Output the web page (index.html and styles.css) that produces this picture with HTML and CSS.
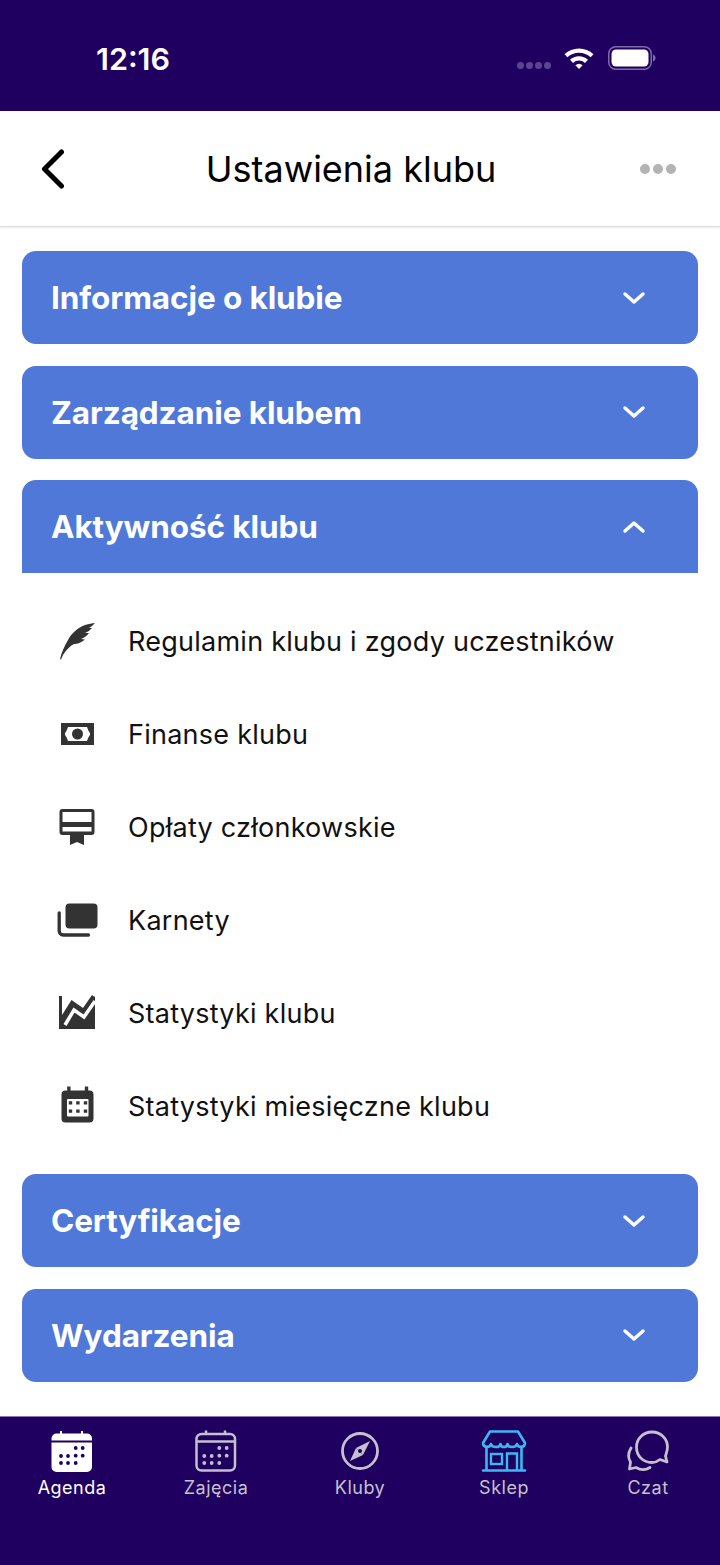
FILE: index.html
```html
<!DOCTYPE html>
<html lang="pl">
<head>
  <meta charset="UTF-8">
  <meta name="viewport" content="width=device-width, initial-scale=1.0">
  <title>Ustawienia klubu</title>
  <link rel="stylesheet" href="styles.css">
</head>
<body>
  <div class="app">
    <!-- Status bar -->
    <div class="status-bar">
      <span class="status-time">12:16</span>
      <div class="status-icons">
        <div class="signal-dots"><i></i><i></i><i></i><i></i></div>
        <svg class="wifi-icon" width="32" height="24" viewBox="0 0 32 24">
          <path d="M1.5 8.2 A21 21 0 0 1 30.5 8.2 L27.6 11.3 A17 17 0 0 0 4.4 11.3 Z" fill="#fff"/>
          <path d="M7 13.8 A13.2 13.2 0 0 1 25 13.8 L22 16.9 A9 9 0 0 0 10 16.9 Z" fill="#fff"/>
          <path d="M12.4 19.3 A5.4 5.4 0 0 1 19.6 19.3 L16 23 Z" fill="#fff"/>
        </svg>
        <svg class="battery-icon" width="48" height="24" viewBox="0 0 48 24">
          <rect x="0.75" y="0.75" width="42.5" height="22.5" rx="7" fill="none" stroke="#7f6ba6" stroke-width="1.5"/>
          <rect x="3.5" y="3.5" width="37" height="17" rx="4.5" fill="#fff"/>
          <path d="M45 8.5 C46.5 9 47.5 10.3 47.5 12 C47.5 13.7 46.5 15 45 15.5 Z" fill="#7f6ba6"/>
        </svg>
      </div>
    </div>

    <!-- Header -->
    <header class="top-bar">
      <svg class="back-icon" width="24" height="40" viewBox="0 0 24 40">
        <path d="M20.500 3 L3.500 20 L20.500 37" fill="none" stroke="#000" stroke-width="5" stroke-linecap="round" stroke-linejoin="round"/>
      </svg>
      <h1 class="top-title">Ustawienia klubu</h1>
      <div class="more-dots"><i></i><i></i><i></i></div>
    </header>

    <main class="content">
      <div class="acc-head">
        <span>Informacje o klubie</span>
        <svg class="chevron" width="24" height="14" viewBox="0 0 24 14"><path d="M3 3 L12 11 L21 3"/></svg>
      </div>
      <div class="acc-head">
        <span>Zarządzanie klubem</span>
        <svg class="chevron" width="24" height="14" viewBox="0 0 24 14"><path d="M3 3 L12 11 L21 3"/></svg>
      </div>

      <div class="acc-open">
        <div class="acc-head acc-head-open">
          <span>Aktywność klubu</span>
          <svg class="chevron" width="24" height="14" viewBox="0 0 24 14"><path d="M3 11 L12 3 L21 11"/></svg>
        </div>
        <ul class="acc-list">
          <li class="acc-row">
            <svg class="row-icon" width="40" height="40" viewBox="0 0 40 40">
              <path d="M4 38 C6 30 9 24 12 19 C15 13 21 7 29 4 C33 3 36 2 39 2 C37 4 35 6 33 7 L36 7 C34 9 32 11 29 12 L33 12 C31 15 28 17 25 18 L29 18.500 C26 21 22 23 18 23 C14 25 10 29 7 34 L5 38.500 Z" fill="#333"/>
            </svg>
            <span>Regulamin klubu i zgody uczestników</span>
          </li>
          <li class="acc-row">
            <svg class="row-icon" width="40" height="40" viewBox="0 0 40 40">
              <path fill-rule="evenodd" d="M5 9 H38 V31 H5 Z M12 13 C11 16 10 18 9 19 V21 C10 22 11 24 12 27 H31 C32 24 33 22 34 21 V19 C33 18 32 16 31 13 Z" fill="#333"/>
              <circle cx="21.500" cy="20" r="5.500" fill="#333"/>
            </svg>
            <span>Finanse klubu</span>
          </li>
          <li class="acc-row">
            <svg class="row-icon" width="40" height="40" viewBox="0 0 40 40">
              <path fill-rule="evenodd" d="M6.500 2 H35.500 A3 3 0 0 1 38.500 5 V25 A3 3 0 0 1 35.500 28 H6.500 A3 3 0 0 1 3.500 25 V5 A3 3 0 0 1 6.500 2 Z M6.500 5 V15 H35.500 V5 Z M6.500 20 V24.500 H35.500 V20 Z" fill="#333"/>
              <path d="M14 28 H28 V38 L21 35 L14 38 Z" fill="#333"/>
            </svg>
            <span>Opłaty członkowskie</span>
          </li>
          <li class="acc-row">
            <svg class="row-icon row-icon-wide" width="42" height="40" viewBox="0 0 42 40">
              <rect x="9.500" y="3.500" width="32" height="25" rx="4" fill="#333"/>
              <path d="M3.200 12.800 V31 A4 4 0 0 0 7.200 35 H32.500" fill="none" stroke="#333" stroke-width="3.300" stroke-linecap="round"/>
            </svg>
            <span>Karnety</span>
          </li>
          <li class="acc-row">
            <svg class="row-icon" width="40" height="40" viewBox="0 0 40 40">
              <path d="M3 3 H6 V23 L16 8 L27 16 L37 2 L39 4 V36 H3 Z" fill="#333"/>
              <path d="M9 32 L18 17 L28 24 L39 8" fill="none" stroke="#fff" stroke-width="3.500"/>
              <path d="M6 23 L16 8 L27 16 L38 1" fill="none" stroke="#fff" stroke-width="3"/>
              <path d="M3 3 H6 V30 H3 Z M15.500 7 L27 15 L36 2 L39 4.500 L27.500 20 L16.500 12.500 L6 28 V22 Z" fill="#333"/>
            </svg>
            <span>Statystyki klubu</span>
          </li>
          <li class="acc-row">
            <svg class="row-icon" width="40" height="40" viewBox="0 0 40 40">
              <path d="M11.200 0.500 H14.500 V4.500 H28.800 V0.500 H32.200 V4.500 H33.500 A4 4 0 0 1 37.500 8.500 V32.500 A4 4 0 0 1 33.500 36.500 H9.500 A4 4 0 0 1 5.500 32.500 V8.500 A4 4 0 0 1 9.500 4.500 H11.200 Z" fill="#333"/>
              <rect x="11" y="13" width="21.500" height="17.500" rx="1" fill="#fff"/>
              <path d="M12.800 15.200 h3.400 v3.300 h-3.400 Z M20.200 15.200 h3.400 v3.300 h-3.400 Z M27.800 15.200 h3.400 v3.300 h-3.400 Z M12.800 23.500 h3.400 v3.300 h-3.400 Z M20.200 23.500 h3.400 v3.300 h-3.400 Z M27.800 23.500 h3.400 v3.300 h-3.400 Z" fill="#333"/>
            </svg>
            <span>Statystyki miesięczne klubu</span>
          </li>
        </ul>
      </div>

      <div class="acc-head">
        <span>Certyfikacje</span>
        <svg class="chevron" width="24" height="14" viewBox="0 0 24 14"><path d="M3 3 L12 11 L21 3"/></svg>
      </div>
      <div class="acc-head">
        <span>Wydarzenia</span>
        <svg class="chevron" width="24" height="14" viewBox="0 0 24 14"><path d="M3 3 L12 11 L21 3"/></svg>
      </div>
    </main>

    <!-- Bottom tabs -->
    <nav class="tab-bar">
      <div class="tab tab-active">
        <svg width="44" height="42" viewBox="0 0 44 42">
          <path d="M10 1 H12 V3.500 H31 V1 H33 V3.500 H37 A5 5 0 0 1 42 8.500 V10.500 H1.500 V8.500 A5 5 0 0 1 6.500 3.500 H10 Z M1.500 12.500 H42 V37 A5 5 0 0 1 37 42 H6.500 A5 5 0 0 1 1.500 37 Z" fill="#fff"/>
          <g fill="#1f0061">
            <circle cx="25.700" cy="18" r="1.900"/><circle cx="32.700" cy="18" r="1.900"/>
            <circle cx="11" cy="26" r="1.900"/><circle cx="18" cy="26" r="1.900"/><circle cx="25.700" cy="25.700" r="1.900"/><circle cx="32.700" cy="25.700" r="1.900"/>
            <circle cx="11" cy="33" r="1.900"/><circle cx="18" cy="33" r="1.900"/><circle cx="25.700" cy="33" r="1.900"/>
          </g>
        </svg>
        <span>Agenda</span>
      </div>
      <div class="tab">
        <svg width="44" height="42" viewBox="0 0 44 42">
          <path d="M12 0.500 V5 M31 0.500 V5" stroke="#c5c0cc" stroke-width="2.500" fill="none"/>
          <rect x="2.500" y="4" width="38.500" height="36.500" rx="5" fill="none" stroke="#c5c0cc" stroke-width="2.500"/>
          <path d="M2.500 11.500 H41" stroke="#c5c0cc" stroke-width="2.500"/>
          <g fill="#c5c0cc">
            <circle cx="25.300" cy="18" r="1.900"/><circle cx="32.700" cy="18" r="1.900"/>
            <circle cx="10.300" cy="26" r="1.900"/><circle cx="17.700" cy="26" r="1.900"/><circle cx="25.300" cy="25.700" r="1.900"/><circle cx="32.700" cy="25.700" r="1.900"/>
            <circle cx="10.300" cy="33" r="1.900"/><circle cx="17.700" cy="33" r="1.900"/><circle cx="25.300" cy="33" r="1.900"/>
          </g>
        </svg>
        <span>Zajęcia</span>
      </div>
      <div class="tab">
        <svg width="44" height="42" viewBox="0 0 44 42">
          <circle cx="22" cy="21" r="17.500" fill="none" stroke="#c5c0cc" stroke-width="2.800"/>
          <path d="M32 11 L25 25 L18 18 Z" fill="#c5c0cc"/>
          <path d="M12 31 L18 18 L25 25 Z" fill="#c5c0cc"/>
          <circle cx="22" cy="21" r="2" fill="#1f0061"/>
        </svg>
        <span>Kluby</span>
      </div>
      <div class="tab">
        <svg width="46" height="42" viewBox="0 0 46 42">
          <path d="M9 1.500 H37 L44 13 C44 18 37 18 36 14 C35 18 27 18 26.500 14 C26 18 20 18 19.500 14 C19 18 11 18 10 14 C9 18 2 18 2 13 Z" fill="none" stroke="#3bb8f0" stroke-width="2.600" stroke-linejoin="round"/>
          <path d="M5.500 17 V40 M40.500 17 V40 M2 40.500 H44" fill="none" stroke="#3bb8f0" stroke-width="2.600" stroke-linecap="round"/>
          <rect x="10" y="24" width="11" height="10" fill="none" stroke="#3bb8f0" stroke-width="2.400"/>
          <path d="M26 40 V23.500 H36 V40" fill="none" stroke="#3bb8f0" stroke-width="2.400"/>
        </svg>
        <span>Sklep</span>
      </div>
      <div class="tab">
        <svg width="44" height="42" viewBox="0 0 44 42">
          <path d="M26 2 C35 2 41.500 9 41.500 17 C41.500 21 40 24 39.500 26 L41 32 L34 29.500 C31.500 31.500 29 32.500 26 32.500 C17 32.500 10.500 26 10.500 17 C10.500 9 17 2 26 2 Z" fill="none" stroke="#c5c0cc" stroke-width="2.800" stroke-linejoin="round"/>
          <path d="M5 18 C2 23 2 28 4.500 32 L3.500 39 L10 37.500 C15 40.500 20 40 24 37.500" fill="none" stroke="#c5c0cc" stroke-width="2.800" stroke-linecap="round" stroke-linejoin="round"/>
        </svg>
        <span>Czat</span>
      </div>
    </nav>
  </div>
</body>
</html>
```

FILE: styles.css
```css
* {
  box-sizing: border-box;
}

body {
  margin: 0;
  font-family: Inter, "Liberation Sans", sans-serif;
  background-color: #fff;
}

.app {
  display: flex;
  flex-direction: column;
  width: 720px;
  height: 1565px;
  overflow: hidden;
}

/* Status bar */
.status-bar {
  display: flex;
  justify-content: space-between;
  align-items: center;
  height: 111px;
  padding: 6px 64px 0 96px;
  background-color: #1f0061;
  flex-shrink: 0;
}

.status-time {
  color: #fff;
  font-size: 30.5px;
  font-weight: 600;
}

.status-icons {
  display: flex;
  align-items: center;
  gap: 8px;
  margin-top: -2px;
}

.signal-dots {
  display: flex;
  gap: 2px;
  margin: 16px 4px 0 0;
}

.signal-dots i {
  width: 7px;
  height: 7px;
  border-radius: 50%;
  background-color: #5b4590;
}

.wifi-icon {
  margin-right: 5px;
}

/* Header */
.top-bar {
  display: flex;
  align-items: center;
  justify-content: space-between;
  height: 116px;
  padding: 0 44px 0 41px;
  background-color: #fff;
  border-bottom: 1px solid #ddd;
  box-shadow: 0 1px 2px rgba(0, 0, 0, 0.08);
  flex-shrink: 0;
}

.top-title {
  margin: 0 3px 0 0;
  font-size: 36px;
  font-weight: 400;
  color: #000;
}

.more-dots {
  display: flex;
  gap: 3px;
}

.more-dots i {
  width: 10px;
  height: 10px;
  border-radius: 50%;
  background-color: #b3b3b3;
}

/* Accordion */
.content {
  flex: 1;
  display: flex;
  flex-direction: column;
  gap: 21.5px;
  padding: 24px 22px 0;
}

.acc-head {
  display: flex;
  align-items: center;
  justify-content: space-between;
  height: 93px;
  padding: 0 52px 0 29px;
  background-color: #4f78d8;
  border-radius: 14px;
  color: #fff;
  font-size: 31.5px;
  font-weight: 700;
  letter-spacing: -0.1px;
  flex-shrink: 0;
}

.acc-head-open {
  border-radius: 14px 14px 0 0;
}

.chevron {
  fill: none;
  stroke: #fff;
  stroke-width: 3.5;
  stroke-linecap: round;
  stroke-linejoin: round;
}

.acc-list {
  list-style: none;
  margin: 0;
  padding: 21.5px 0 0;
}

.acc-row {
  display: flex;
  align-items: center;
  height: 93px;
  padding-left: 33.5px;
  color: #111;
  font-size: 27px;
  letter-spacing: 0.25px;
}

.row-icon {
  flex-shrink: 0;
  margin-right: 32.5px;
}

.row-icon-wide {
  margin-right: 30.5px;
}

/* Bottom tabs */
.tab-bar {
  display: grid;
  grid-template-columns: repeat(5, 144px);
  height: 149px;
  padding-top: 13px;
  background-color: #1f0061;
  border-top: 1px solid #8a78b0;
  flex-shrink: 0;
}

.tab {
  display: flex;
  flex-direction: column;
  align-items: center;
  color: #c5c0cc;
  font-size: 18px;
  font-weight: 400;
  letter-spacing: 0.5px;
}

.tab svg {
  margin-bottom: 5px;
}

.tab-active {
  color: #fff;
}
```
